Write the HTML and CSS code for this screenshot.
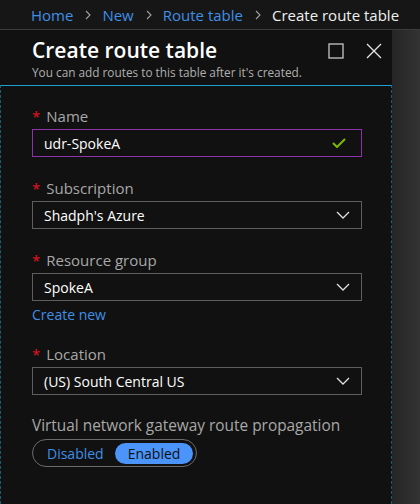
FILE: index.html
```html
<!DOCTYPE html>
<html>
<head>
<meta charset="utf-8">
<link rel="stylesheet" href="styles.css">
</head>
<body>
<div class="crumbs">
  <a class="crumb-link">Home</a>
  <svg class="sep" width="6" height="10" viewBox="0 0 6 10"><path d="M1 1 L5 5 L1 9" fill="none" stroke="#a0a0a0" stroke-width="1.1"/></svg>
  <a class="crumb-link">New</a>
  <svg class="sep" width="6" height="10" viewBox="0 0 6 10"><path d="M1 1 L5 5 L1 9" fill="none" stroke="#a0a0a0" stroke-width="1.1"/></svg>
  <a class="crumb-link">Route table</a>
  <svg class="sep" width="6" height="10" viewBox="0 0 6 10"><path d="M1 1 L5 5 L1 9" fill="none" stroke="#a0a0a0" stroke-width="1.1"/></svg>
  <span class="crumb-current">Create route table</span>
</div>
<div class="main">
  <div class="panel">
    <div class="header">
      <div class="title-row">
        <h1 class="title">Create route table</h1>
        <div class="actions">
          <svg class="icon-max" width="16" height="16" viewBox="0 0 16 16"><rect x="1" y="1" width="14" height="14" fill="none" stroke="#c8c8c8" stroke-width="1.3"/></svg>
          <svg class="icon-close" width="16" height="16" viewBox="0 0 16 16"><path d="M1 1 L15 15 M15 1 L1 15" fill="none" stroke="#e6e6e6" stroke-width="1.3"/></svg>
        </div>
      </div>
      <div class="subtitle">You can add routes to this table after it's created.</div>
    </div>
    <div class="content">
      <div class="field">
        <div class="label"><span class="req">*</span>Name</div>
        <div class="box box-active">
          <span class="value">udr-SpokeA</span>
          <svg class="check" width="14" height="10" viewBox="0 0 14 10"><path d="M1 5 L5 9 L13 1" fill="none" stroke="#7fba00" stroke-width="2"/></svg>
        </div>
      </div>
      <div class="field">
        <div class="label"><span class="req">*</span>Subscription</div>
        <div class="box">
          <span class="value">Shadph's Azure</span>
          <svg class="chev" width="14" height="8" viewBox="0 0 14 8"><path d="M1 1 L7 7 L13 1" fill="none" stroke="#e0e0e0" stroke-width="1.3"/></svg>
        </div>
      </div>
      <div class="field">
        <div class="label"><span class="req">*</span>Resource group</div>
        <div class="box">
          <span class="value">SpokeA</span>
          <svg class="chev" width="14" height="8" viewBox="0 0 14 8"><path d="M1 1 L7 7 L13 1" fill="none" stroke="#e0e0e0" stroke-width="1.3"/></svg>
        </div>
        <a class="create-new">Create new</a>
      </div>
      <div class="field">
        <div class="label"><span class="req">*</span>Location</div>
        <div class="box">
          <span class="value">(US) South Central US</span>
          <svg class="chev" width="14" height="8" viewBox="0 0 14 8"><path d="M1 1 L7 7 L13 1" fill="none" stroke="#e0e0e0" stroke-width="1.3"/></svg>
        </div>
      </div>
      <div class="field">
        <div class="label label-wide">Virtual network gateway route propagation</div>
        <div class="toggle">
          <span class="seg">Disabled</span>
          <span class="seg seg-on">Enabled</span>
        </div>
      </div>
    </div>
  </div>
  <div class="shade"></div>
</div>
</body>
</html>
```

FILE: styles.css
```css
html, body {
  margin: 0;
  padding: 0;
}
body {
  width: 420px;
  height: 504px;
  overflow: hidden;
  background: #161616;
  font-family: "Open Sans", "Noto Sans", sans-serif;
  color: #ffffff;
}
.crumbs {
  display: flex;
  align-items: center;
  padding-left: 31px;
  font-size: 15px;
  border-bottom: 1px solid #3c3c3c;
  box-sizing: border-box;
  height: 30px;
  white-space: nowrap;
}
.crumb-link {
  color: #3f8fe6;
}
.crumb-current {
  color: #f0f0f0;
}
.sep {
  margin: 0 11px 0 12px;
}
.main {
  display: flex;
  height: 474px;
}
.panel {
  width: 392px;
  background: #111111;
  display: flex;
  flex-direction: column;
}
.shade {
  flex: 1;
  background: linear-gradient(to right, #262626, #333333);
}
.header {
  height: 55px;
  box-sizing: border-box;
  padding: 6px 10px 0 32px;
}
.title-row {
  display: flex;
  align-items: center;
  height: 28px;
}
.title {
  margin: 0;
  font-size: 21px;
  font-weight: 600;
  line-height: 28px;
  color: #ffffff;
}
.actions {
  margin-left: auto;
  display: flex;
  align-items: center;
  gap: 22px;
  padding-top: 1px;
}
.subtitle {
  font-size: 11.8px;
  line-height: 16px;
  color: #b0b0b0;
}
.content {
  flex: 1;
  border-top: 1px solid #1f9fd2;
  border-left: 1px dashed #1c5d72;
  border-right: 1px dashed #1c5d72;
  padding: 20px 0 0 31px;
  display: flex;
  flex-direction: column;
  gap: 21px;
}
.field {
  display: flex;
  flex-direction: column;
  width: 330px;
}
.label {
  font-size: 15px;
  line-height: 20px;
  color: #a8a8a8;
  margin-bottom: 3px;
  white-space: nowrap;
}
.label-wide {
  font-size: 15.4px;
}
.req {
  color: #e81123;
  margin-right: 6px;
}
.box {
  height: 28px;
  box-sizing: border-box;
  border: 1px solid #5e5e5e;
  display: flex;
  align-items: center;
  padding: 0 11px 0 11px;
  font-size: 14px;
}
.box-active {
  border-color: #8d32a8;
}
.value {
  flex: 1;
  color: #ffffff;
}
.check {
  margin-right: 4px;
}
.create-new {
  color: #3f8fe6;
  font-size: 14px;
  line-height: 20px;
  margin-top: 4px;
  margin-bottom: -2px;
}
.toggle {
  align-self: flex-start;
  display: flex;
  align-items: center;
  height: 28px;
  box-sizing: border-box;
  border: 1px solid #6a6a6a;
  border-radius: 14px;
  padding: 0 3px;
}
.seg {
  height: 21px;
  line-height: 21px;
  padding: 0 11px;
  border-radius: 11px;
  font-size: 14px;
  color: #3f8fe6;
}
.seg-on {
  background: #4a94fa;
  color: #111111;
  padding: 0 13px;
}
```
